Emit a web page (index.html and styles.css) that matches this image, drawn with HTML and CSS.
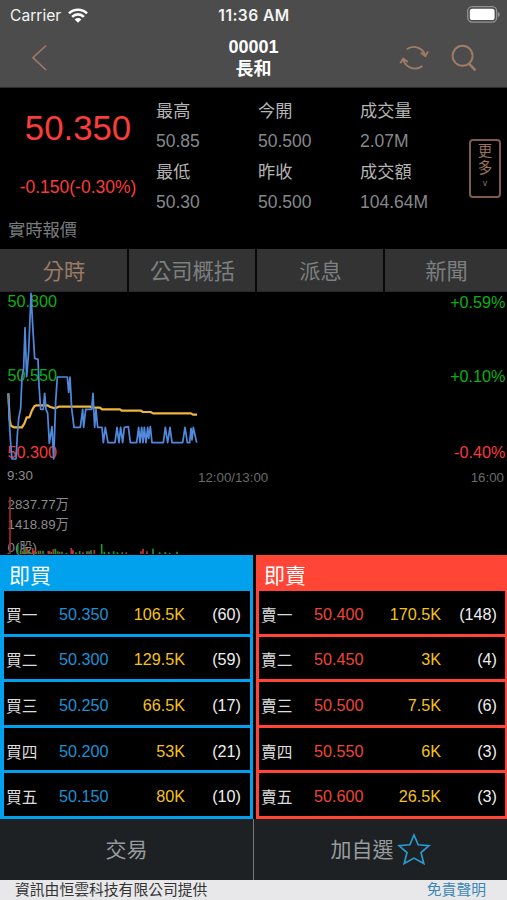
FILE: index.html
```html
<!DOCTYPE html>
<html lang="zh-Hant">
<head>
<meta charset="utf-8">
<title>00001 長和</title>
<link rel="stylesheet" href="styles.css">
</head>
<body>
<header class="top">
  <div class="status">
    <div class="carrier"><span>Carrier</span>
      <svg width="20" height="15" viewBox="0 0 20 15"><g fill="none" stroke="#fff" stroke-width="2.6"><path d="M1 5.4A12.8 12.8 0 0 1 19 5.4"/><path d="M4.1 8.8a8.3 8.3 0 0 1 11.8 0"/></g><path d="M6.7 11.4a4.7 4.7 0 0 1 6.6 0L10 14.8z" fill="#fff"/></svg>
    </div>
    <div class="clock">11:36 AM</div>
    <svg class="battery" width="33" height="17" viewBox="0 0 33 17"><rect x=".7" y=".7" width="29" height="15.4" rx="4.5" fill="none" stroke="#929292" stroke-width="1.3"/><rect x="2.8" y="2.8" width="24.8" height="11.2" rx="2.6" fill="#fff"/><path d="M31 6v5q1.8-.7 1.8-2.5T31 6z" fill="#929292"/></svg>
  </div>
  <nav class="nav">
    <svg class="back" width="18" height="28" viewBox="0 0 18 28"><path d="M15.1 1.5 1.9 13.7 15.1 26" fill="none" stroke="#9c7868" stroke-width="1.7"/></svg>
    <h1 class="title"><span>00001</span><span>長和</span></h1>
    <div class="tools">
      <svg width="30" height="28" viewBox="0 0 30 28" fill="none" stroke="#a07c66" stroke-width="1.9"><path d="M7.8 5.2A12 12 0 0 1 26.3 11.5"/><path d="M21.8 8.6l4.5 3.6 2.8-4.7"/><path d="M23.4 21.9A12 12 0 0 1 4.3 15.6"/><path d="M1.2 19.3l3.1-4.6 4.5 3.4"/></svg>
      <svg width="26" height="28" viewBox="0 0 26 28" fill="none" stroke="#a07c66" stroke-width="1.9"><circle cx="11.6" cy="11.8" r="10"/><path d="M17.7 19.4 24.4 26.4" stroke-width="2.6"/></svg>
    </div>
  </nav>
</header>

<section class="quote">
  <div class="last">
    <div class="price">50.350</div>
    <div class="change">-0.150(-0.30%)</div>
    <div class="live">實時報價</div>
  </div>
  <dl class="stats">
    <div><dt>最高</dt><dd>50.85</dd></div>
    <div><dt>今開</dt><dd>50.500</dd></div>
    <div><dt>成交量</dt><dd>2.07M</dd></div>
    <div><dt>最低</dt><dd>50.30</dd></div>
    <div><dt>昨收</dt><dd>50.500</dd></div>
    <div><dt>成交額</dt><dd>104.64M</dd></div>
  </dl>
  <div class="more"><span>更</span><span>多</span><i>v</i></div>
</section>

<div class="tabs"><span class="on">分時</span><span>公司概括</span><span>派息</span><span>新聞</span></div>

<svg class="chart" width="507" height="263" viewBox="0 0 507 263">
  <g class="level up"><text x="7.5" y="14.5">50.800</text><text x="7.5" y="88.5">50.550</text></g>
  <g class="level down"><text x="7.5" y="165.5">50.300</text></g>
  <g class="level up" text-anchor="end"><text x="505.5" y="16">+0.59%</text><text x="505.5" y="90">+0.10%</text></g>
  <g class="level down" text-anchor="end"><text x="505.5" y="165.5">-0.40%</text></g>
  <g transform="translate(0 -7) scale(.33333)" fill="none" stroke-linejoin="round">
    <path stroke="#eeb63c" stroke-width="6.6" d="M25 325 29 405 33 422 42 427H66L73 416 80 397H88L96 376 103 364 110 361H142L151 366 166 370 176 365H270L282 368H300L306 373H360L365 377H424L428 381H452L459 385H573L579 389H591"/>
    <path stroke="#5088dc" stroke-width="5.2" d="M25 325 29 430 33 490 36 522H48L52 450 56 400 62 370 66 275 71 250 75 128 80 275 86 200 93 25 98 120 104 220 114 223 117 300 122 373H130L134 325 138 373 143 385 148 475 156 425 161 522 167 350 172 276H202L206 322 210 276 215 370 222 427H241L248 373 251 427 257 373H275L279 325 284 427 288 373 293 427H306L310 473 316 427 324 473H345L351 427 357 473 362 427 368 473 373 427 385 425 391 473H410L416 427 420 473 425 427 429 473 433 427 438 473 443 427 446 460 451 425 456 473H490L496 427 503 473 510 427 516 473H548L555 427 562 473H569L573 430 576 465 580 427 590 473"/>
  </g>
  <g class="small">
    <text x="7" y="188">9:30</text>
    <text x="198" y="189.5" class="dim">12:00/13:00</text>
    <text x="504" y="189.5" text-anchor="end" class="dim">16:00</text>
    <text x="7.5" y="216.5">2837.77万</text>
    <text x="7.5" y="236.5">1418.89万</text>
    <text x="7.5" y="259.5">0(股)</text>
  </g>
  <g transform="translate(0 173) scale(.33333)" fill="none" stroke-width="5">
    <path stroke="#a62630" d="M30 96V267"/>
    <path stroke="#1f9a26" d="M25 267v-4M53 267v-27M62 267v-9M75 267v-16M86 267v-9M108 267v-7M121 267v-10M129 267v-10M154 267v-6M166 267v-16M173 267v-8M186 267v-7M199 267v-4M228 267v-5M239 267v-9M261 267v-8M273 267v-11M305 267v-30M313 267v-7M326 267v-7M341 267v-8M352 267v-5M367 267v-5M459 267v-16M479 267v-5M496 267v-6M509 267v-4M531 267v-7"/>
    <path stroke="#c5352e" d="M68 267v-8M81 267v-18M98 267v-18M103 267v-10M115 267v-10M145 267v-10M149 267v-8M160 267v-14M179 267v-7M214 267v-18M219 267v-11M249 267v-5M267 267v-8M283 267v-12M379 267v-5M423 267v-8M429 267v-16M441 267v-8"/>
  </g>
</svg>

<main class="book">
  <section class="side buy">
    <h2>即買</h2>
    <div class="row"><b>買一</b><span class="px">50.350</span><span class="qty">106.5K</span><span class="n">(60)</span></div>
    <div class="row"><b>買二</b><span class="px">50.300</span><span class="qty">129.5K</span><span class="n">(59)</span></div>
    <div class="row"><b>買三</b><span class="px">50.250</span><span class="qty">66.5K</span><span class="n">(17)</span></div>
    <div class="row"><b>買四</b><span class="px">50.200</span><span class="qty">53K</span><span class="n">(21)</span></div>
    <div class="row"><b>買五</b><span class="px">50.150</span><span class="qty">80K</span><span class="n">(10)</span></div>
  </section>
  <section class="side sell">
    <h2>即賣</h2>
    <div class="row"><b>賣一</b><span class="px">50.400</span><span class="qty">170.5K</span><span class="n">(148)</span></div>
    <div class="row"><b>賣二</b><span class="px">50.450</span><span class="qty">3K</span><span class="n">(4)</span></div>
    <div class="row"><b>賣三</b><span class="px">50.500</span><span class="qty">7.5K</span><span class="n">(6)</span></div>
    <div class="row"><b>賣四</b><span class="px">50.550</span><span class="qty">6K</span><span class="n">(3)</span></div>
    <div class="row"><b>賣五</b><span class="px">50.600</span><span class="qty">26.5K</span><span class="n">(3)</span></div>
  </section>
</main>

<div class="actions">
  <div class="act">交易</div>
  <div class="act">加自選<svg width="34" height="32" viewBox="0 0 34 32"><path d="M17 2l4.2 9.8 10.9.8-8.1 7 2.8 10.9-9.8-5.4-9.8 5.4L10 19.600l-8.100-7 10.900-.8z" fill="none" stroke="#2b9ad0" stroke-width="1.7"/></svg></div>
</div>
<footer class="foot"><span>資訊由恒雲科技有限公司提供</span><a>免責聲明</a></footer>
</body>
</html>
```

FILE: styles.css
```css
* { box-sizing: border-box; margin: 0; padding: 0; }
body {
  width: 507px; height: 900px; overflow: hidden;
  display: flex; flex-direction: column;
  background: #000; color: #999;
  font-family: "Liberation Sans", "Noto Sans CJK TC", sans-serif;
}
svg { display: block; flex: none; }

.top { height: 88px; background: #4c4c4c; border-bottom: 1px solid #2c2c2c; }
.status {
  height: 30px; padding: 0 7px 0 10px;
  display: grid; grid-template-columns: 1fr auto 1fr; align-items: center;
  font-family: Inter, sans-serif; color: #f4f4f4;
}
.carrier { display: flex; align-items: center; gap: 7px; font-size: 15.6px; }
.clock { font-size: 15.6px; font-weight: 600; letter-spacing: .45px; padding-right: 2px; }
.battery { justify-self: end; margin-top: -2px; }
.nav {
  height: 57px; padding: 0 30px 2px 31px;
  display: grid; grid-template-columns: 1fr auto 1fr; align-items: center;
}
.title {
  display: flex; flex-direction: column; align-items: center;
  font-size: 18px; line-height: 22px; color: #fff; padding-right: 1px;
}
.tools { display: flex; justify-content: flex-end; gap: 22px; }

.quote { height: 161px; display: flex; }
.last { width: 156px; padding-top: 20px; color: #fb3c3b; text-align: center; }
.price { font-size: 34.8px; line-height: 40px; }
.change { font-size: 17.5px; line-height: 22px; margin-top: 28px; }
.live { font-size: 17.3px; line-height: 24px; margin-top: 20px; padding-left: 8px; text-align: left; color: #777c7e; }
.stats {
  width: 313px; height: 122px; margin-top: 8px;
  display: grid; grid-template-columns: 102px 102px 1fr; grid-template-rows: 61px 61px;
}
.stats dt { font-size: 17.2px; line-height: 30px; color: #b4b4b4; }
.stats dd { font-size: 17.5px; line-height: 31px; color: #85898a; }
.more {
  width: 32px; height: 59px; margin-top: 51px; padding-top: 2px;
  border: 2px solid #7d5d49; border-radius: 4px;
  display: flex; flex-direction: column; align-items: center;
  font-size: 14.5px; line-height: 17px; color: #99735c;
}
.more i { font-size: 9px; font-style: normal; line-height: 13px; color: #8b7365; }

.tabs {
  height: 43px; display: grid; grid-template-columns: 127px 126px 126px 1fr; gap: 2px;
  background: #080808;
}
.tabs span {
  background: #333; color: #7c8080; border-bottom: 1px solid #292929;
  font-size: 21.2px; line-height: 45px; text-align: center; height: 43px;
  padding-left: 1px;
}
.tabs .on { color: #9c7b65; }

.level { font-size: 16.2px; }
.up { fill: #0caf16; }
.down { fill: #f43a3c; }
.small { font-size: 13.3px; fill: #8c8c8c; }
.small .dim { fill: #6a6a6a; }

.book { height: 264px; display: grid; grid-template-columns: 253px 251px; gap: 3px; }
.side { display: grid; grid-template-rows: 33px repeat(5, 1fr); row-gap: 3px; padding-bottom: 3px; }
.buy { background: #02a1ee; padding-left: 4px; padding-right: 3px; }
.sell { background: #ff4636; padding-left: 3px; padding-right: 2px; }
.side h2 { font-size: 21px; font-weight: 400; line-height: 41px; color: #fff; padding-left: 5px; }
.row {
  background: #000; display: grid; grid-template-columns: 53px 70px 56px 56px;
  align-items: center; padding: 4px 0 0 2px; font-size: 16.2px;
}
.sell .row { grid-template-columns: 53px 70px 57px 56px; }
.row b { font-weight: 400; font-size: 15.7px; color: #ddd; }
.row .qty, .row .n { text-align: right; }
.row .n { color: #eee; }
.row .qty { color: #f5c21c; }
.buy .px { color: #1c91d4; }
.sell .px { color: #ec4639; }

.actions { height: 61px; display: grid; grid-template-columns: 253px 1fr; gap: 1px; background: #777; }
.act {
  background: #1d2124; color: #989c9e; font-size: 21px; padding-bottom: 3px;
  display: flex; align-items: center; justify-content: center; gap: 3px;
}
.act svg { margin-top: 1px; }
.foot {
  height: 20px; padding: 0 21px 0 15px; background: #e8e8ea; color: #333;
  display: flex; justify-content: space-between; font-size: 14.8px; line-height: 20px;
}
.foot a { color: #3b88b7; }
```
